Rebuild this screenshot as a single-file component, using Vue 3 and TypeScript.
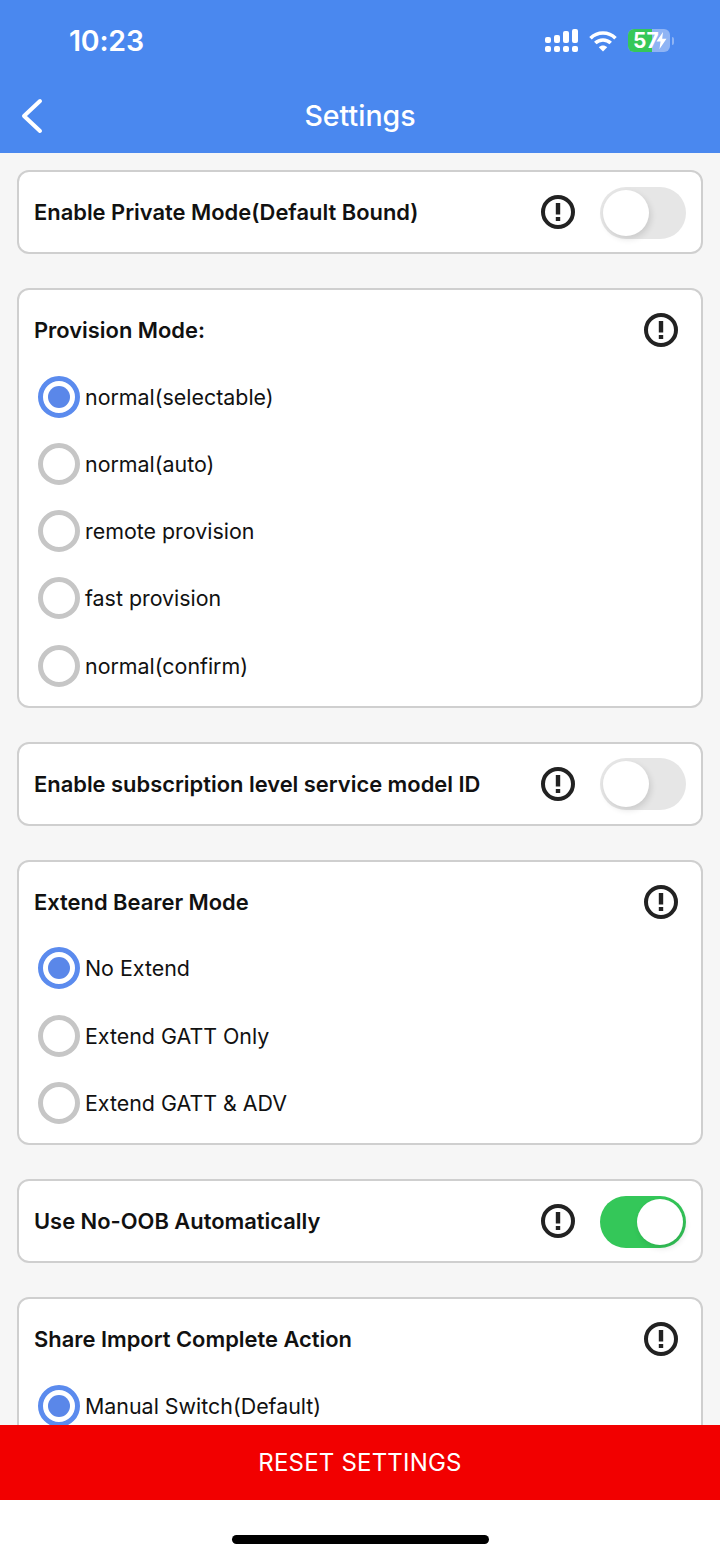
<template>
  <div class="page">
    <header class="topbar">
      <div class="status">
        <span class="time">10:23</span>
        <div class="status-icons">
          <svg width="33" height="23" viewBox="0 0 33 23" fill="#fff">
            <rect x="0" y="8" width="6" height="6" rx="2" />
            <rect x="9" y="6" width="6" height="8" rx="2" />
            <rect x="18" y="2" width="6" height="12" rx="2" />
            <rect x="27" y="0" width="6" height="14" rx="2" />
            <rect x="0" y="17" width="6" height="6" rx="2" />
            <rect x="9" y="17" width="6" height="6" rx="2" />
            <rect x="18" y="17" width="6" height="6" rx="2" />
            <rect x="27" y="17" width="6" height="6" rx="2" />
          </svg>
          <svg class="wifi" width="28" height="22" viewBox="0 0 28 22" fill="none" stroke="#fff" stroke-width="3.6">
            <path d="M1.5 8.2C8.500 1.300 19.500 1.300 26.500 8.200" />
            <path d="M6.300 13C10.600 8.900 17.400 8.900 21.700 13" />
            <path d="M14 21.500L9.800 17.200C12.200 15 15.800 15 18.200 17.200Z" fill="#fff" stroke="none" />
          </svg>
          <div class="battery">
            <div class="battery-fill"></div>
            <span class="battery-num">57</span>
            <svg class="bolt" width="11" height="17" viewBox="0 0 11 17" fill="#fff">
              <path d="M7 0L0.500 9.500H4.500L3.500 17L10.500 6.800H6.200Z" />
            </svg>
          </div>
          <div class="battery-tip"></div>
        </div>
      </div>
      <div class="navbar">
        <svg class="back" width="24" height="36" viewBox="0 0 24 36" fill="none" stroke="#fff" stroke-width="4" stroke-linecap="round" stroke-linejoin="round">
          <path d="M20 3L4 18L20 33" />
        </svg>
        <span class="nav-title">Settings</span>
      </div>
    </header>

    <main class="content">
      <section v-for="card in cards" :key="card.title" class="card" :class="{ 'card-group': card.options }">
        <div class="card-head">
          <span class="card-title">{{ card.title }}</span>
          <div class="card-actions">
            <svg class="info" width="36" height="36" viewBox="0 0 36 36">
              <circle cx="18" cy="18" r="15" fill="none" stroke="#222" stroke-width="4" />
              <rect x="15.800" y="9" width="4.400" height="11.500" fill="#222" />
              <rect x="15.800" y="23" width="4.400" height="4" fill="#222" />
            </svg>
            <div v-if="card.toggle !== undefined" class="switch" :class="{ on: card.toggle }">
              <div class="knob"></div>
            </div>
          </div>
        </div>
        <div v-if="card.options" class="options">
          <div v-for="(opt, i) in card.options" :key="opt" class="option">
            <div class="radio" :class="{ checked: i === 0 }"></div>
            <span class="option-label">{{ opt }}</span>
          </div>
        </div>
      </section>
    </main>

    <button class="reset" type="button">RESET SETTINGS</button>
    <div class="home-area"><div class="home-bar"></div></div>
  </div>
</template>

<script setup lang="ts">
interface SettingCard {
  title: string
  toggle?: boolean
  options?: string[]
}

const cards: SettingCard[] = [
  { title: 'Enable Private Mode(Default Bound)', toggle: false },
  {
    title: 'Provision Mode:',
    options: ['normal(selectable)', 'normal(auto)', 'remote provision', 'fast provision', 'normal(confirm)']
  },
  { title: 'Enable subscription level service model ID', toggle: false },
  { title: 'Extend Bearer Mode', options: ['No Extend', 'Extend GATT Only', 'Extend GATT & ADV'] },
  { title: 'Use No-OOB Automatically', toggle: true },
  { title: 'Share Import Complete Action', options: ['Manual Switch(Default)'] }
]
</script>

<style>
html,
body {
  margin: 0;
  background: #fff;
}
</style>

<style scoped>
.page {
  width: 720px;
  height: 1558px;
  display: flex;
  flex-direction: column;
  overflow: hidden;
  font-family: Inter, "Liberation Sans", sans-serif;
  color: #111;
  background: #f6f6f6;
}

.topbar {
  height: 153px;
  flex: none;
  background: #4a88ef;
  color: #fff;
}

.status {
  height: 81px;
  display: flex;
  justify-content: space-between;
  align-items: center;
  padding: 0 46px 0 69px;
  box-sizing: border-box;
}

.time {
  font-size: 28.5px;
  font-weight: 600;
  letter-spacing: -0.2px;
}

.status-icons {
  display: flex;
  align-items: center;
}

.wifi {
  margin-left: 11px;
}

.battery {
  position: relative;
  width: 42px;
  height: 23px;
  margin-left: 11px;
  border-radius: 6px;
  background: #8fb4f4;
  overflow: hidden;
}

.battery-fill {
  width: 24px;
  height: 100%;
  background: #35c759;
}

.battery-num {
  position: absolute;
  left: 5px;
  top: 0;
  font-size: 21px;
  line-height: 23px;
  font-weight: 700;
  color: #fff;
}

.bolt {
  position: absolute;
  left: 28px;
  top: 3px;
}

.battery-tip {
  width: 2px;
  height: 8px;
  margin-left: 2px;
  border-radius: 0 2px 2px 0;
  background: #8fb4f4;
}

.navbar {
  height: 72px;
  box-sizing: border-box;
  padding-bottom: 4px;
  position: relative;
  display: flex;
  align-items: center;
  justify-content: center;
}

.back {
  position: absolute;
  left: 20px;
  top: 17px;
}

.nav-title {
  font-size: 28.5px;
  font-weight: 500;
}

.content {
  flex: 1;
  min-height: 0;
  overflow: hidden;
  padding: 17px 17px 0;
  display: flex;
  flex-direction: column;
  gap: 34px;
}

.card {
  flex: none;
  box-sizing: border-box;
  background: #fff;
  border: 2px solid #cfcfcf;
  border-radius: 12px;
  padding: 0 15px;
}

.card-head {
  height: 80px;
  display: flex;
  align-items: center;
  justify-content: space-between;
}

.card-title {
  font-size: 21.9px;
  font-weight: 600;
  color: #111;
}

.card-actions {
  display: flex;
  align-items: center;
  gap: 24px;
}

.card-group .card-head {
  padding-right: 7px;
}

.switch {
  width: 86px;
  height: 52px;
  margin-top: 1px;
  box-sizing: border-box;
  padding: 3px;
  border-radius: 26px;
  background: #e6e6e6;
  display: flex;
}

.switch.on {
  background: #34c759;
  justify-content: flex-end;
}

.knob {
  width: 46px;
  height: 46px;
  border-radius: 50%;
  background: #fff;
  box-shadow: 2px 3px 6px rgba(0, 0, 0, 0.12);
}

.options {
  display: flex;
  flex-direction: column;
  margin-top: -7px;
  padding-bottom: 6.5px;
}

.option {
  height: 67.25px;
  display: flex;
  align-items: center;
  gap: 5px;
  padding-left: 4px;
}

.radio {
  width: 42px;
  height: 42px;
  flex: none;
  box-sizing: border-box;
  border-radius: 50%;
  border: 5px solid #c6c6c6;
  padding: 5px;
}

.radio.checked {
  border-color: #5b8bee;
}

.radio.checked::after {
  content: "";
  display: block;
  width: 22px;
  height: 22px;
  border-radius: 50%;
  background: #5a87e9;
}

.option-label {
  font-size: 21.4px;
  color: #111;
}

.reset {
  flex: none;
  height: 75px;
  border: 0;
  padding: 0;
  background: #f20000;
  color: #fff;
  font-family: inherit;
  font-size: 24px;
  letter-spacing: 0.2px;
}

.home-area {
  flex: none;
  height: 58px;
  background: #fff;
  display: flex;
  justify-content: center;
  padding-top: 35px;
  box-sizing: border-box;
}

.home-bar {
  width: 257px;
  height: 9px;
  border-radius: 5px;
  background: #000;
}
</style>
